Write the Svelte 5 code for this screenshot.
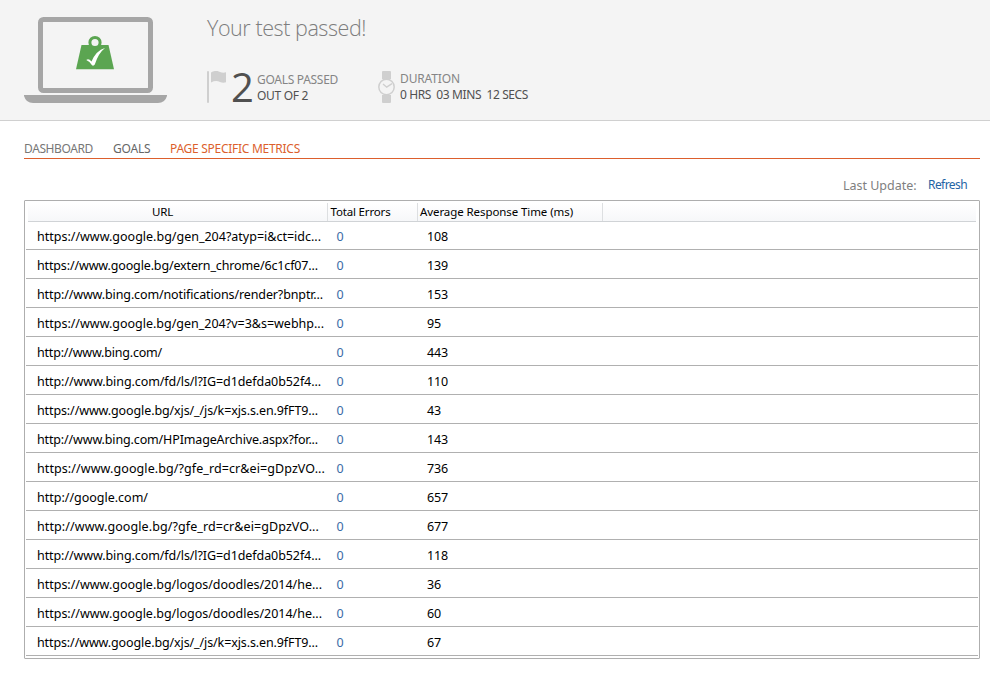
<script>
  const rows = [
    ['https://www.google.bg/gen_204?atyp=i&ct=idc...', 108, 284],
    ['https://www.google.bg/extern_chrome/6c1cf07...', 139, 281],
    ['http://www.bing.com/notifications/render?bnptr...', 153, 286],
    ['https://www.google.bg/gen_204?v=3&s=webhp...', 95, 287],
    ['http://www.bing.com/', 443, 125],
    ['http://www.bing.com/fd/ls/l?IG=d1defda0b52f4...', 110, 284],
    ['https://www.google.bg/xjs/_/js/k=xjs.s.en.9fFT9...', 43, 281],
    ['http://www.bing.com/HPImageArchive.aspx?for...', 143, 281],
    ['https://www.google.bg/?gfe_rd=cr&ei=gDpzVO...', 736, 288],
    ['http://google.com/', 657, 111],
    ['http://www.google.bg/?gfe_rd=cr&ei=gDpzVO...', 677, 282],
    ['http://www.bing.com/fd/ls/l?IG=d1defda0b52f4...', 118, 284],
    ['https://www.google.bg/logos/doodles/2014/he...', 36, 285],
    ['https://www.google.bg/logos/doodles/2014/he...', 60, 285],
    ['https://www.google.bg/xjs/_/js/k=xjs.s.en.9fFT9...', 67, 281],
  ];

  // Tracks the letters so that a label fills the given width.
  function fit(node, width) {
    const natural = node.getBoundingClientRect().width;
    node.style.letterSpacing = `${(width - natural) / node.textContent.length}px`;
  }
</script>

<div class="page">
  <header>
    <svg class="laptop" width="144" height="88" viewBox="0 0 144 88">
      <rect x="16.5" y="2.5" width="110" height="71" rx="3" fill="none" stroke="#a6a6a6" stroke-width="5" />
      <path d="M0 78h143v1q-2 7-9 7H9Q2 86 0 79z" fill="#a6a6a6" />
      <path d="M57.500 28h27L90 52.200H52z" fill="#5ba551" />
      <circle cx="71" cy="25.500" r="5.100" fill="#f4f4f4" stroke="#5ba551" stroke-width="3" />
      <path d="M62.300 43q2.200-2.200 5.200 1.600 4.500-11 13.500-13.600Q74.500 36 70.800 47.500q-1.500 2-3 0.500-2-3.500-5.500-5z" fill="#fff" />
    </svg>
    <div class="summary">
      <h1><span use:fit={159}>Your test passed!</span></h1>
      <div class="stats">
        <svg class="flag" width="20" height="33" viewBox="0 0 20 33">
          <rect width="2" height="32" rx="1" fill="#cfcfcf" />
          <path d="M4 1.500q5-3 9-.5 3 1.200 6 .3v10q-3 1-6-.3-4-2-9 .5z" fill="#cfcfcf" />
        </svg>
        <b class="big">2</b>
        <div class="stat goals">
          <div class="label"><span use:fit={81}>GOALS PASSED</span></div>
          <div class="value"><span use:fit={51}>OUT OF 2</span></div>
        </div>
        <svg class="watch" width="18" height="33" viewBox="0 0 18 33">
          <path d="M4 1q0-1 1-1h7q1 0 1 1v7H4zM4 24h9v7q0 1-1 1H5q-1 0-1-1z" fill="#cfcfcf" />
          <circle cx="8.500" cy="16" r="7.700" fill="#f4f4f4" stroke="#cfcfcf" stroke-width="1.500" />
          <path d="M5 13l3.700 3.200L14 12.700" fill="none" stroke="#cfcfcf" stroke-width="1.400" />
        </svg>
        <div class="stat duration">
          <div class="label"><span use:fit={60}>DURATION</span></div>
          <div class="value"><span use:fit={128}>0 HRS&nbsp; 03 MINS&nbsp; 12 SECS</span></div>
        </div>
      </div>
    </div>
  </header>

  <nav>
    <a class="dashboard"><span use:fit={69}>DASHBOARD</span></a>
    <a class="goals-tab"><span use:fit={37.5}>GOALS</span></a>
    <a class="active"><span use:fit={130}>PAGE SPECIFIC METRICS</span></a>
  </nav>

  <div class="update">
    <span class="last"><span use:fit={73.5}>Last Update:</span></span>
    <a class="refresh"><span use:fit={39}>Refresh</span></a>
  </div>

  <section class="grid">
    <div class="head">
      <div class="c1"><span use:fit={21}>URL</span></div>
      <div class="c2"><span use:fit={60}>Total Errors</span></div>
      <div class="c3"><span use:fit={153}>Average Response Time (ms)</span></div>
    </div>
    {#each rows as [url, time, width]}
      <div class="row">
        <div class="url"><span use:fit={width}>{url}</span></div>
        <div class="errors">0</div>
        <div class="time"><span use:fit={String(time).length * 7}>{time}</span></div>
      </div>
    {/each}
  </section>
</div>

<style>
  :global(body) {
    margin: 0;
    background: #fff;
  }
  .page {
    width: 990px;
    height: 679px;
    overflow: hidden;
    font-family: 'Noto Sans', 'Open Sans', sans-serif;
    font-size: 12.5px;
    color: #000;
    white-space: nowrap;
  }
  header {
    display: flex;
    box-sizing: border-box;
    height: 121px;
    padding: 17px 0 0 24px;
    background: #f4f4f4;
    border-bottom: 1px solid #d0d0d0;
  }
  .laptop {
    flex: none;
  }
  .summary {
    margin-left: 39px;
  }
  h1 {
    margin: 0;
    height: 54px;
    font: 300 21.5px/22px 'Open Sans', sans-serif;
    color: #7d7d7d;
  }
  .stats {
    display: flex;
    height: 33px;
  }
  .big {
    width: 23px;
    margin-left: 4px;
    font: 400 40px/32px 'Open Sans', sans-serif;
    color: #505050;
  }
  .stat {
    margin-top: 1px;
    font-size: 12px;
    line-height: 16px;
  }
  .goals {
    width: 121px;
    margin-left: 3px;
  }
  .duration {
    margin-left: 4px;
    margin-top: 0;
  }
  .label {
    color: #858585;
  }
  .value {
    color: #505050;
  }
  nav {
    display: flex;
    box-sizing: border-box;
    height: 38px;
    margin: 0 10px 0 24px;
    padding-top: 19px;
    border-bottom: 1px solid #dc5f2d;
    font-size: 12px;
    line-height: 18px;
    color: #666;
  }
  .dashboard {
    width: 89px;
    color: #777;
  }
  .goals-tab {
    width: 57px;
  }
  .active {
    color: #dc5f2d;
  }
  .update {
    display: flex;
    justify-content: flex-end;
    height: 23px;
    margin-right: 23px;
    padding-top: 18px;
    line-height: 18px;
    color: #808080;
  }
  .refresh {
    margin-left: 11.5px;
    font-size: 12px;
    line-height: 15px;
    color: #2464a4;
  }
  .grid {
    box-sizing: border-box;
    height: 459px;
    margin: 0 10px 0 24px;
    padding: 2px 1px 0;
    border: 1px solid #aeaeae;
    border-radius: 1px;
  }
  .head {
    display: flex;
    height: 18px;
    margin: 0 2px;
    background: linear-gradient(#fff, #f6f7f9);
    border-bottom: 1px solid #d0d3d6;
    font-size: 11.5px;
    line-height: 17px;
  }
  .head > div {
    box-sizing: border-box;
    border-right: 1px solid #dddfe1;
  }
  .c1 {
    width: 300px;
    padding-left: 124px;
  }
  .c2 {
    width: 90px;
    padding-left: 2.5px;
  }
  .c3 {
    width: 185px;
    padding-left: 2px;
  }
  .row {
    display: flex;
    box-sizing: border-box;
    height: 29px;
    padding-left: 11px;
    border-bottom: 1px solid #b0b0b0;
    line-height: 31px;
  }
  .head + .row {
    height: 28px;
    line-height: 30px;
  }
  .url {
    width: 299.5px;
  }
  .errors {
    width: 90.5px;
    color: #3a6ba6;
  }
</style>
